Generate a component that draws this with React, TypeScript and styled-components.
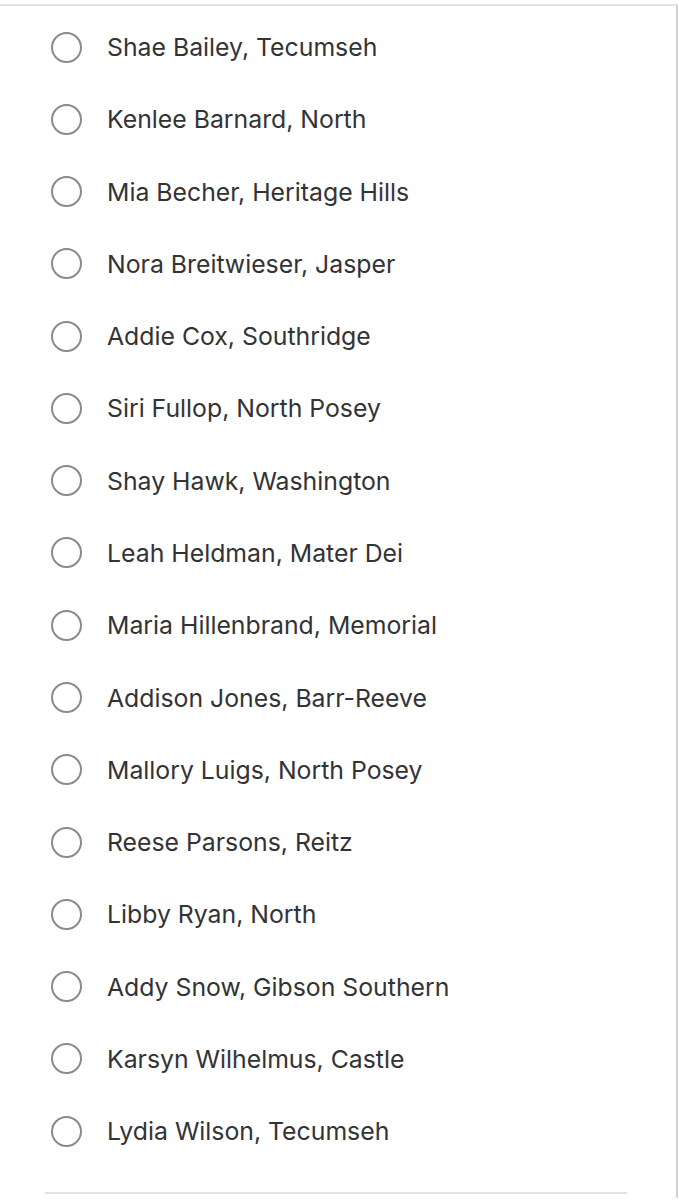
import React from "react";
import styled, { createGlobalStyle } from "styled-components";

const Global = createGlobalStyle`
  html, body { margin: 0; padding: 0; background: #ffffff; }
  body { font-family: Inter, "Noto Sans", sans-serif; }
`;

const Frame = styled.div`
  margin-top: 4px;
  border-top: 2px solid #e3e3e3;
  width: 678px;
  height: 1194px;
  box-sizing: border-box;
  border-right: 2px solid #d2d2d2;
  display: flex;
  flex-direction: column;
`;

const List = styled.div`
  display: flex;
  flex-direction: column;
  padding-top: 5px;
`;

const Row = styled.label`
  display: flex;
  align-items: center;
  height: 72.27px;
  padding-left: 51px;
  gap: 25px;
`;

const Radio = styled.span`
  width: 31px;
  height: 31px;
  box-sizing: border-box;
  border-radius: 50%;
  border: 2.5px solid #8a8a8a;
  flex: none;
`;

const Name = styled.span`
  font-size: 24.8px;
  color: #333336;
`;

const Divider = styled.div`
  margin: 24.5px 0 0 45px;
  width: 582px;
  height: 2px;
  background: #e4e4e4;
`;

const names = [
  "Shae Bailey, Tecumseh",
  "Kenlee Barnard, North",
  "Mia Becher, Heritage Hills",
  "Nora Breitwieser, Jasper",
  "Addie Cox, Southridge",
  "Siri Fullop, North Posey",
  "Shay Hawk, Washington",
  "Leah Heldman, Mater Dei",
  "Maria Hillenbrand, Memorial",
  "Addison Jones, Barr-Reeve",
  "Mallory Luigs, North Posey",
  "Reese Parsons, Reitz",
  "Libby Ryan, North",
  "Addy Snow, Gibson Southern",
  "Karsyn Wilhelmus, Castle",
  "Lydia Wilson, Tecumseh",
];

export default function App() {
  return (
    <>
      <Global />
      <Frame>
        <List>
          {names.map((n) => (
            <Row key={n}>
              <Radio />
              <Name>{n}</Name>
            </Row>
          ))}
        </List>
        <Divider />
      </Frame>
    </>
  );
}
